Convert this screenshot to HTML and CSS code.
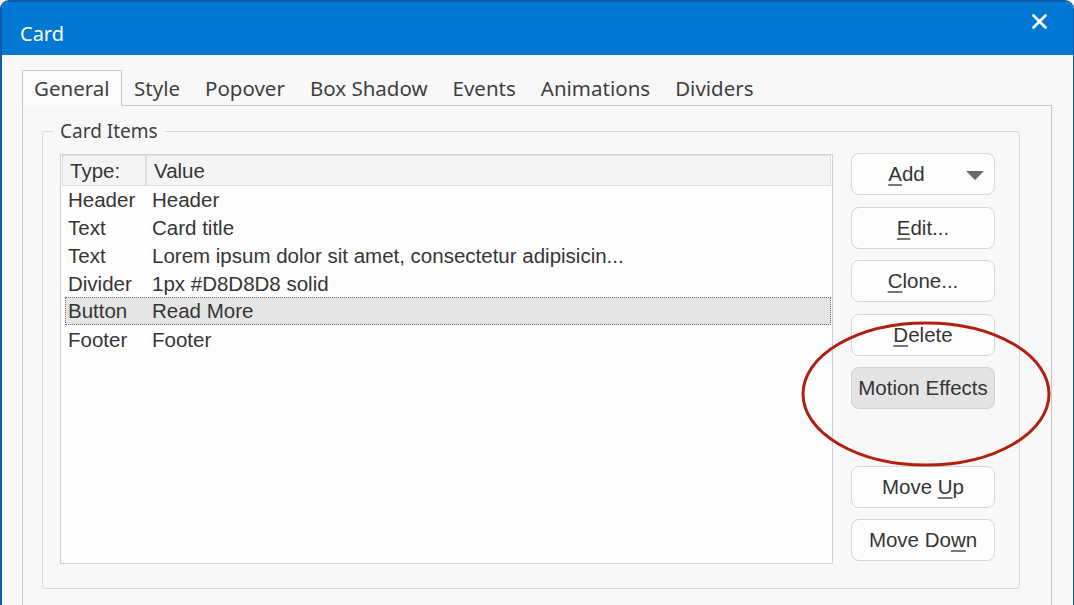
FILE: index.html
```html
<!DOCTYPE html>
<html lang="en">

<head>
  <meta charset="UTF-8">
  <title>Card</title>
  <link rel="stylesheet" href="styles.css">
</head>

<body>
  <div class="window">
    <div class="titlebar">
      <span class="title">Card</span>
      <a href="#" class="close">
        <svg width="15" height="15" viewBox="0 0 15 15">
          <path d="M1.5 1.5L13.5 13.5M13.5 1.5L1.5 13.5" stroke="#fff" stroke-width="2.6" stroke-linecap="round" />
        </svg>
      </a>
    </div>
    <div class="content">
      <ul class="tabs">
        <li class="active">General</li>
        <li>Style</li>
        <li>Popover</li>
        <li>Box Shadow</li>
        <li>Events</li>
        <li>Animations</li>
        <li>Dividers</li>
      </ul>
      <div class="panel">
        <fieldset class="group">
          <legend>Card Items</legend>
          <div class="group-body">
            <div class="list">
              <div class="list-head">
                <span class="cell cell-type">Type:</span>
                <span class="cell">Value</span>
              </div>
              <div class="row"><span class="cell">Header</span><span class="cell">Header</span></div>
              <div class="row"><span class="cell">Text</span><span class="cell">Card title</span></div>
              <div class="row"><span class="cell">Text</span><span class="cell">Lorem ipsum dolor sit amet, consectetur adipisicin...</span></div>
              <div class="row"><span class="cell">Divider</span><span class="cell">1px #D8D8D8 solid</span></div>
              <div class="row selected"><span class="cell">Button</span><span class="cell cell-value">Read More</span></div>
              <div class="row"><span class="cell">Footer</span><span class="cell">Footer</span></div>
            </div>
            <div class="actions">
              <button class="btn btn-add"><span class="btn-label"><u>A</u>dd</span><span class="caret"></span></button>
              <button class="btn"><u>E</u>dit...</button>
              <button class="btn"><u>C</u>lone...</button>
              <button class="btn"><u>D</u>elete</button>
              <button class="btn btn-active">Motion Effects</button>
              <button class="btn btn-up">Move <u>U</u>p</button>
              <button class="btn">Move Do<u>w</u>n</button>
            </div>
          </div>
        </fieldset>
      </div>
    </div>
    <svg class="highlight" width="260" height="154" viewBox="0 0 260 154">
      <ellipse cx="130" cy="77" rx="123" ry="71" fill="none" stroke="#b1200f" stroke-width="3" />
    </svg>
  </div>
</body>

</html>
```

FILE: styles.css
```css
html,
body {
  margin: 0;
  padding: 0;
  background: #f8f8f8;
}

.window {
  position: relative;
  box-sizing: border-box;
  width: 1074px;
  height: 605px;
  overflow: hidden;
  border: 2px solid #0b5ba8;
  border-bottom: 0;
  border-right-width: 1px;
  border-radius: 9px 9px 0 0;
  background: #f8f8f8;
}

.titlebar {
  display: flex;
  align-items: flex-start;
  height: 53px;
  background: #0078d4;
}

.titlebar .title {
  margin: 18px 0 0 18px;
  font-family: "Noto Sans", "Liberation Sans", sans-serif;
  font-size: 20px;
  line-height: 27px;
  color: #ffffff;
}

.titlebar .close {
  display: block;
  margin: 12px 26px 0 auto;
  width: 15px;
  height: 15px;
}

.titlebar .close svg {
  display: block;
}

.content {
  padding: 15px 21px 0 20px;
}

.tabs {
  display: flex;
  list-style: none;
  margin: 0;
  padding: 0;
  height: 35px;
}

.tabs li {
  box-sizing: border-box;
  height: 35px;
  padding: 2px 11.5px 0;
  font-family: "Noto Sans", "Liberation Sans", sans-serif;
  font-size: 20.5px;
  line-height: 31px;
  color: #3f3f3f;
  border: 1px solid transparent;
  border-bottom: 0;
}

.tabs li.active {
  position: relative;
  z-index: 1;
  height: 36px;
  padding-left: 11px;
  padding-right: 11px;
  border-color: #c9c9c9;
  background: #fbfbfb;
}

.panel {
  height: 520px;
  padding: 12px 31px 0 19px;
  border: 1px solid #c6c6c6;
  border-bottom: 0;
  background: #f8f8f8;
}

.group {
  margin: 0;
  padding: 10px 24px 24px 17px;
  border: 1px solid #d9d9d9;
  border-radius: 3px;
}

.group legend {
  margin-left: -7px;
  padding: 0 7px;
  font-family: "Noto Sans", "Liberation Sans", sans-serif;
  font-size: 19px;
  line-height: 26px;
  color: #3f3f3f;
}

.group-body {
  display: flex;
  gap: 18px;
}

.list {
  flex: 1;
  box-sizing: border-box;
  height: 410px;
  padding: 0 1px;
  border: 1px solid #d2d2d2;
  background: #fdfdfd;
  font-family: "Liberation Sans", Arial, sans-serif;
  font-size: 20.5px;
  color: #353535;
}

.list-head {
  display: grid;
  grid-template-columns: 84px 1fr;
  box-sizing: border-box;
  height: 31px;
  border: 1px solid #dcdcdc;
  background: #f4f4f4;
  line-height: 29px;
}

.list-head .cell {
  padding-left: 7px;
}

.list-head .cell-type {
  border-right: 2px solid #dddddd;
}

.row {
  display: grid;
  grid-template-columns: 84px 1fr;
  box-sizing: border-box;
  height: 28px;
  line-height: 28px;
  white-space: nowrap;
}

.row .cell {
  padding-left: 6px;
}

.row.selected {
  margin: -1px 0 1px 3px;
  grid-template-columns: 80px 1fr;
  border: 1px dotted #6f6f6f;
  background: #e5e5e5;
  line-height: 26px;
}

.row.selected .cell {
  padding-left: 2px;
}

.row.selected .cell-value {
  padding-left: 6px;
}

.actions {
  display: flex;
  flex-direction: column;
  gap: 11.5px;
  width: 144px;
  margin-top: -1px;
}

.btn {
  box-sizing: border-box;
  height: 42px;
  padding: 0;
  border: 1px solid #d6d6d6;
  border-radius: 8px;
  background: #fdfdfd;
  font-family: "Liberation Sans", Arial, sans-serif;
  font-size: 20.5px;
  color: #353535;
  text-align: center;
}

.btn u {
  text-decoration-color: #777777;
  text-underline-offset: 3px;
}

.btn-add {
  display: flex;
  align-items: center;
  padding: 0 10px 0 0;
}

.btn-add .btn-label {
  flex: 1;
  padding-right: 5px;
  text-align: center;
}

.btn-add .caret {
  width: 0;
  height: 0;
  border-left: 9px solid transparent;
  border-right: 9px solid transparent;
  border-top: 9px solid #6a6a6a;
  margin-top: 2px;
}

.btn-active {
  background: #e4e4e4;
  border-color: #d0d0d0;
}

.btn-up {
  margin-top: 45px;
}

.highlight {
  position: absolute;
  left: 794px;
  top: 315px;
}
```
